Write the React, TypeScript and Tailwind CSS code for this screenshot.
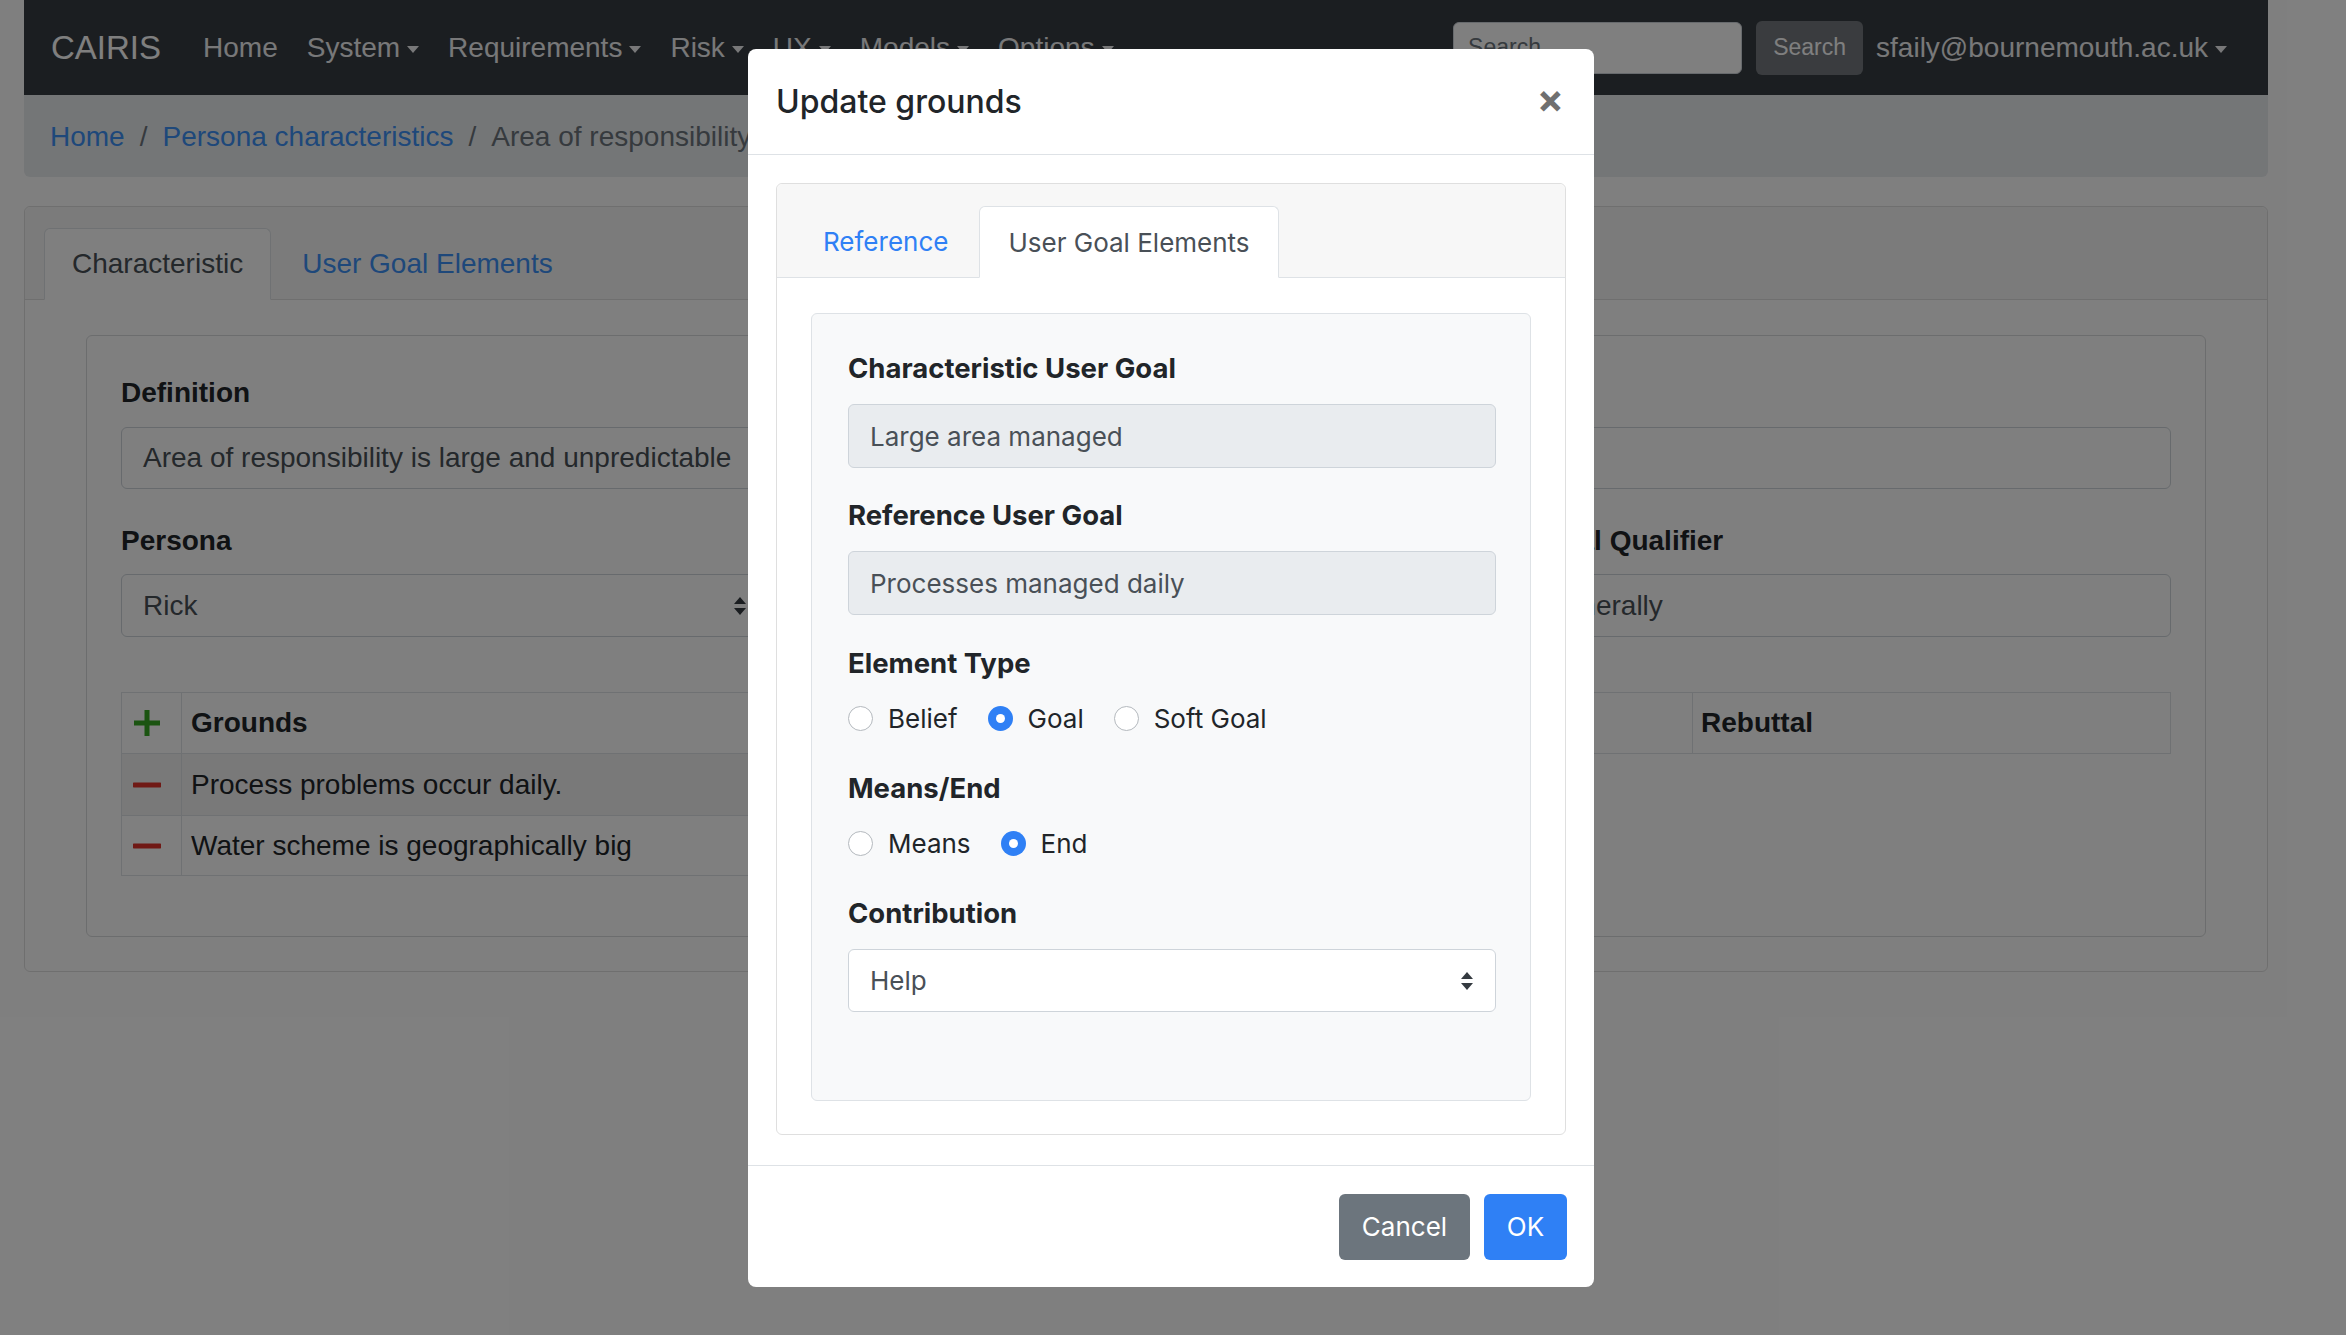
import React from 'react';

// caret used by the dropdown toggles in the navbar
const Caret = () => (
  <span className="inline-block ml-[7px] w-0 h-0 border-l-[6px] border-r-[6px] border-t-[7px] border-l-transparent border-r-transparent border-t-current align-middle" />
);

const SelectArrows = ({ color = '#343a40' }: { color?: string }) => (
  <svg width="14" height="18" viewBox="0 0 14 18">
    <path d="M7 0 L13 7 L1 7 Z" fill={color} />
    <path d="M7 18 L13 11 L1 11 Z" fill={color} />
  </svg>
);

const Radio = ({ checked, label }: { checked?: boolean; label: string }) => (
  <div className="flex items-center">
    {checked ? (
      <span className="w-[25px] h-[25px] rounded-full bg-[#2f80f5] flex items-center justify-center">
        <span className="w-[9px] h-[9px] rounded-full bg-white" />
      </span>
    ) : (
      <span className="w-[25px] h-[25px] rounded-full bg-white border border-[#b4b9be]" />
    )}
    <span className="ml-[15px] text-[26px] text-[#212529]">{label}</span>
  </div>
);

const ModalLabel = ({ children, className = '' }: { children: React.ReactNode; className?: string }) => (
  <div className={`text-[27.5px] leading-[39px] font-bold text-[#212529] ${className}`}>{children}</div>
);

const Minus = () => (
  <svg width="28" height="8" viewBox="0 0 28 8">
    <path d="M1 4 H27" stroke="#e0332a" strokeWidth="5" strokeLinecap="round" />
  </svg>
);

export default function App() {
  return (
    <div className="relative w-[2346px] h-[1335px] overflow-hidden bg-white">
      {/* Page behind the modal */}
      <div className="ml-[24px] w-[2244px] font-['Liberation_Sans',Arial,sans-serif]">
        {/* Navbar */}
        <nav className="h-[95px] bg-[#363c42] flex items-center pl-[27px] pr-[41px]">
          <span className="text-[33px] text-white mr-[42px]">CAIRIS</span>
          <div className="flex items-center gap-[29px] text-[28px] text-[#f0f1f2]">
            <span>Home</span>
            <span>System<Caret /></span>
            <span>Requirements<Caret /></span>
            <span>Risk<Caret /></span>
            <span>UX<Caret /></span>
            <span>Models<Caret /></span>
            <span>Options<Caret /></span>
          </div>
          <div className="ml-auto flex items-center">
            <div className="w-[289px] h-[52px] bg-white border border-[#ced4da] rounded-[6px] flex items-center pl-[14px] text-[23px] text-[#6c757d]">
              Search
            </div>
            <div className="ml-[14px] w-[107px] h-[54px] bg-[#74797e] rounded-[6px] flex items-center justify-center text-[23px] text-white">
              Search
            </div>
            <span className="ml-[13px] text-[28px] text-[#f0f1f2]">sfaily@bournemouth.ac.uk<Caret /></span>
          </div>
        </nav>

        {/* Breadcrumb */}
        <div className="h-[82px] bg-[#e9ecef] rounded-b-[6px] flex items-center pl-[26px] pt-[2px] text-[28px]">
          <span className="text-[#3d90f5]">Home</span>
          <span className="px-[15px] text-[#6c757d]">/</span>
          <span className="text-[#3d90f5]">Persona characteristics</span>
          <span className="px-[15px] text-[#6c757d]">/</span>
          <span className="text-[#6c757d]">Area of responsibility is large and unpredictable</span>
        </div>

        {/* Card */}
        <div className="mt-[29px] h-[766px] border border-[#dfdfdf] rounded-[6px]">
          <div className="h-[93px] bg-[#f7f7f7] border-b border-[#dfdfdf] rounded-t-[6px] flex items-end pl-[19px]">
            <div className="h-[72px] -mb-px bg-white border border-[#dee2e6] border-b-white rounded-t-[6px] flex items-center px-[27px] text-[28px] text-[#495057]">
              Characteristic
            </div>
            <div className="h-[71px] ml-[4px] flex items-center px-[27px] text-[28px] text-[#3d90f5]">User Goal Elements</div>
          </div>

          <div className="px-[61px] pt-[35px]">
            <div className="h-[602px] border border-[#d8dadc] rounded-[6px] px-[34px] pt-[37px] text-[28px] text-[#212529]">
              <div className="font-bold leading-[40px]">Definition</div>
              <div className="mt-[14px] h-[62px] bg-white border border-[#ced4da] rounded-[6px] flex items-center pl-[21px] text-[#495057]">
                Area of responsibility is large and unpredictable
              </div>

              <div className="mt-[32px] grid grid-cols-[641px_641px_1fr] gap-x-[59px]">
                <div>
                  <div className="font-bold leading-[40px]">Persona</div>
                  <div className="mt-[13px] h-[63px] bg-white border border-[#ced4da] rounded-[6px] flex items-center justify-between pl-[21px] pr-[14px] text-[#495057]">
                    <span>Rick</span>
                    <SelectArrows />
                  </div>
                </div>
                <div>
                  <div className="font-bold leading-[40px]">Behavioural Variable</div>
                  <div className="mt-[13px] h-[63px] bg-white border border-[#ced4da] rounded-[6px] flex items-center justify-between pl-[21px] pr-[14px] text-[#495057]">
                    <span>Activities</span>
                    <SelectArrows />
                  </div>
                </div>
                <div>
                  <div className="font-bold leading-[40px]">Modal Qualifier</div>
                  <div className="mt-[13px] h-[63px] bg-white border border-[#ced4da] rounded-[6px] flex items-center pl-[21px] text-[#495057]">
                    Generally
                  </div>
                </div>
              </div>

              <table className="mt-[55px] w-full border-collapse">
                <thead>
                  <tr className="h-[61px]">
                    <th className="w-[60px] border border-[#dee2e6] pl-[11px] text-left">
                      <svg width="28" height="28" viewBox="0 0 28 28" className="block">
                        <path d="M14 1 V27 M1 14 H27" stroke="#36a822" strokeWidth="5" />
                      </svg>
                    </th>
                    <th className="w-[756px] border border-[#dee2e6] text-left pl-[9px] font-bold">Grounds</th>
                    <th className="w-[755px] border border-[#dee2e6] text-left pl-[9px] font-bold">Warrant</th>
                    <th className="border border-[#dee2e6] text-left pl-[8px] font-bold">Rebuttal</th>
                  </tr>
                </thead>
                <tbody>
                  <tr className="h-[62px]">
                    <td className="border border-[#dee2e6] bg-[#f2f2f2] pl-[11px]">
                      <Minus />
                    </td>
                    <td className="border border-[#dee2e6] bg-[#f2f2f2] pl-[9px]">Process problems occur daily.</td>
                  </tr>
                  <tr className="h-[60px]">
                    <td className="border border-[#dee2e6] pl-[11px]">
                      <Minus />
                    </td>
                    <td className="border border-[#dee2e6] pl-[9px]">Water scheme is geographically big</td>
                  </tr>
                </tbody>
              </table>
            </div>
          </div>
        </div>
      </div>

      {/* Backdrop */}
      <div className="absolute inset-0 bg-black/50" />

      {/* Modal */}
      <div className="absolute left-[748px] top-[49px] w-[846px] h-[1238px] bg-white rounded-[8px] flex flex-col font-['Inter',sans-serif]">
        <div className="h-[106px] border-b border-[#dee2e6] flex items-center justify-between pl-[28px] pr-[30px]">
          <span className="text-[32px] font-medium text-[#212529]">Update grounds</span>
          <span className="-mt-[6px] text-[40px] leading-none font-bold text-[#707070]">×</span>
        </div>

        <div className="px-[28px] pt-[28px]">
          <div className="h-[952px] border border-[#dfdfdf] rounded-[6px]">
            <div className="h-[94px] bg-[#f7f7f7] border-b border-[#dee2e6] rounded-t-[6px] flex items-end pl-[19px]">
              <div className="h-[71px] flex items-center px-[27px] text-[26px] text-[#2f80f5]">Reference</div>
              <div className="ml-[4px] h-[72px] -mb-px bg-white border border-[#dee2e6] border-b-white rounded-t-[6px] flex items-center px-[28px] text-[26px] text-[#495057]">
                User Goal Elements
              </div>
            </div>

            <div className="px-[34px] pt-[35px]">
              <div className="h-[788px] bg-[#f8f9fa] border border-[#dee2e6] rounded-[6px] pl-[36px] pr-[34px] pt-[35px]">
                <ModalLabel>Characteristic User Goal</ModalLabel>
                <div className="mt-[16px] h-[64px] bg-[#e9ecef] border border-[#ced4da] rounded-[6px] flex items-center pl-[21px] text-[26px] text-[#495057]">
                  Large area managed
                </div>

                <ModalLabel className="mt-[28px]">Reference User Goal</ModalLabel>
                <div className="mt-[16px] h-[64px] bg-[#e9ecef] border border-[#ced4da] rounded-[6px] flex items-center pl-[21px] text-[26px] text-[#495057]">
                  Processes managed daily
                </div>

                <ModalLabel className="mt-[29px]">Element Type</ModalLabel>
                <div className="mt-[15px] h-[40px] flex items-center gap-[30px]">
                  <Radio label="Belief" />
                  <Radio label="Goal" checked />
                  <Radio label="Soft Goal" />
                </div>

                <ModalLabel className="mt-[31px]">Means/End</ModalLabel>
                <div className="mt-[15px] h-[40px] flex items-center gap-[30px]">
                  <Radio label="Means" />
                  <Radio label="End" checked />
                </div>

                <ModalLabel className="mt-[31px]">Contribution</ModalLabel>
                <div className="mt-[16px] h-[63px] bg-white border border-[#ced4da] rounded-[6px] flex items-center justify-between pl-[21px] pr-[21px] text-[26px] text-[#495057]">
                  <span>Help</span>
                  <SelectArrows />
                </div>
              </div>
            </div>
          </div>
        </div>

        <div className="mt-auto h-[122px] border-t border-[#dee2e6] flex items-center justify-end gap-[14px] pr-[27px]">
          <div className="w-[131px] h-[66px] bg-[#6c757d] rounded-[6px] flex items-center justify-center text-[26px] text-white">Cancel</div>
          <div className="w-[83px] h-[66px] bg-[#2f80f5] rounded-[6px] flex items-center justify-center text-[26px] text-white">OK</div>
        </div>
      </div>
    </div>
  );
}
